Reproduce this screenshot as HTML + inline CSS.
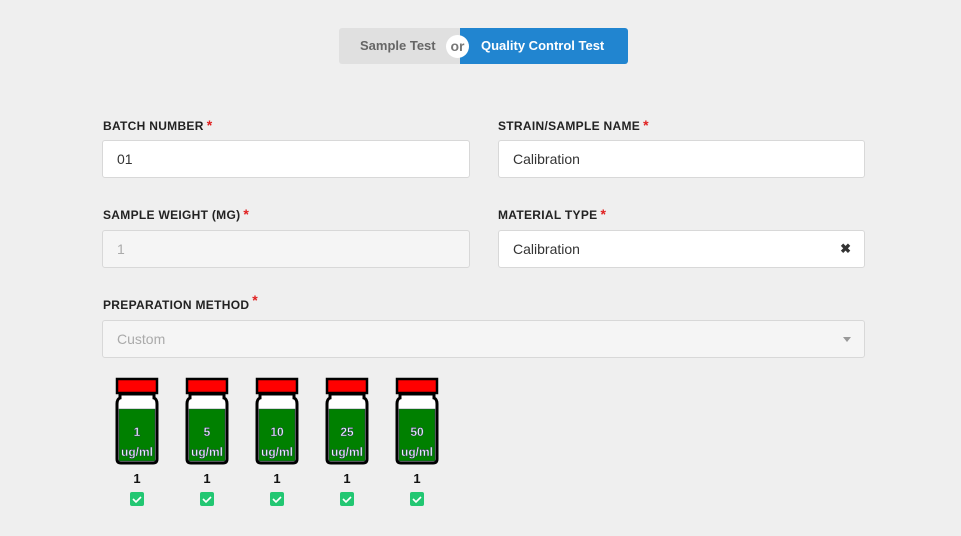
<!DOCTYPE html>
<html><head><style>
body{margin:0;width:961px;height:536px;background:#efefef;font-family:"Liberation Sans",sans-serif;position:relative;overflow:hidden}
.a{position:absolute}
.lbl{position:absolute;font-size:12px;font-weight:bold;color:#222;letter-spacing:.3px}
.lbl b{color:#e02020;margin-left:3px;font-size:14px}
.in{position:absolute;height:36px;background:#fff;border:1px solid #d8d8d8;border-radius:3px;font-size:14px;color:#333;line-height:36px;padding-left:14px;box-sizing:content-box}
.dis{background:#f5f5f5;color:#999}
.n{position:absolute;font-size:13px;font-weight:bold;color:#111;width:42px;text-align:center}
.cb{position:absolute;width:14px;height:14px;background:#22c772;border-radius:2px}
</style></head><body>
<div class="a" style="left:339px;top:28px;width:121px;height:36px;background:#e0e0e0;border-radius:3px 0 0 3px;color:#666;font-size:13px;font-weight:bold;line-height:36px;text-indent:21px">Sample Test</div>
<div class="a" style="left:460px;top:28px;width:168px;height:36px;background:#2185d0;border-radius:0 3px 3px 0;color:#fff;font-size:13px;font-weight:bold;line-height:36px;text-indent:21px">Quality Control Test</div>
<div class="a" style="left:446px;top:35px;width:23px;height:23px;border-radius:50%;background:#fff;color:#777;font-size:14px;font-weight:bold;text-align:center;line-height:22px">or</div>

<div class="lbl" style="left:103px;top:117px">BATCH NUMBER<b>*</b></div>
<div class="lbl" style="left:498px;top:117px">STRAIN/SAMPLE NAME<b>*</b></div>
<div class="in" style="left:102px;top:140px;width:352px">01</div>
<div class="in" style="left:498px;top:140px;width:351px">Calibration</div>
<div class="lbl" style="left:103px;top:206px">SAMPLE WEIGHT (MG)<b>*</b></div>
<div class="lbl" style="left:498px;top:206px">MATERIAL TYPE<b>*</b></div>
<div class="in dis" style="left:102px;top:230px;width:352px;color:#aaa">1</div>
<div class="in" style="left:498px;top:230px;width:351px">Calibration<span style="position:absolute;right:13px;font-weight:bold;color:#333;font-size:13px">✖</span></div>
<div class="lbl" style="left:103px;top:296px">PREPARATION METHOD<b style="position:relative;top:-4px">*</b></div>
<div class="in dis" style="left:102px;top:320px;width:747px;color:#aaa">Custom<span style="position:absolute;right:13px;top:16px;border:4px solid transparent;border-top:5px solid #999;border-bottom:0"></span></div>

<svg class="a" style="left:0;top:0" width="961" height="536">
<defs><g id="v">
<path d="M5,17 L5,21 Q2,22 2,27 L2,82 Q2,86 6,86 L38,86 Q42,86 42,82 L42,27 Q42,22 39,21 L39,17 Z" fill="#fff" stroke="#000" stroke-width="3"/>
<rect x="4" y="32" width="36" height="52" fill="#008000"/>
<rect x="2" y="2" width="40" height="14" fill="#f00" stroke="#000" stroke-width="2.5"/>
</g></defs>
<g font-family="Liberation Sans" font-size="12" font-weight="bold" fill="#e8f0ff" text-anchor="middle" stroke="#335" stroke-width=".4">
<use href="#v" x="115" y="377"/><text x="137" y="436">1</text><text x="137" y="456">ug/ml</text>
<use href="#v" x="185" y="377"/><text x="207" y="436">5</text><text x="207" y="456">ug/ml</text>
<use href="#v" x="255" y="377"/><text x="277" y="436">10</text><text x="277" y="456">ug/ml</text>
<use href="#v" x="325" y="377"/><text x="347" y="436">25</text><text x="347" y="456">ug/ml</text>
<use href="#v" x="395" y="377"/><text x="417" y="436">50</text><text x="417" y="456">ug/ml</text>
</g>
</svg>
<div class="n" style="left:116px;top:471px">1</div>
<div class="n" style="left:186px;top:471px">1</div>
<div class="n" style="left:256px;top:471px">1</div>
<div class="n" style="left:326px;top:471px">1</div>
<div class="n" style="left:396px;top:471px">1</div>
<div class="cb" style="left:130px;top:492px"></div>
<div class="cb" style="left:200px;top:492px"></div>
<div class="cb" style="left:270px;top:492px"></div>
<div class="cb" style="left:340px;top:492px"></div>
<div class="cb" style="left:410px;top:492px"></div>
<svg class="a" style="left:0;top:0" width="961" height="536" fill="none" stroke="#fff" stroke-width="1.6">
<path d="M133,499 l3,3 l5,-5"/><path d="M203,499 l3,3 l5,-5"/><path d="M273,499 l3,3 l5,-5"/><path d="M343,499 l3,3 l5,-5"/><path d="M413,499 l3,3 l5,-5"/>
</svg>
</body></html>
